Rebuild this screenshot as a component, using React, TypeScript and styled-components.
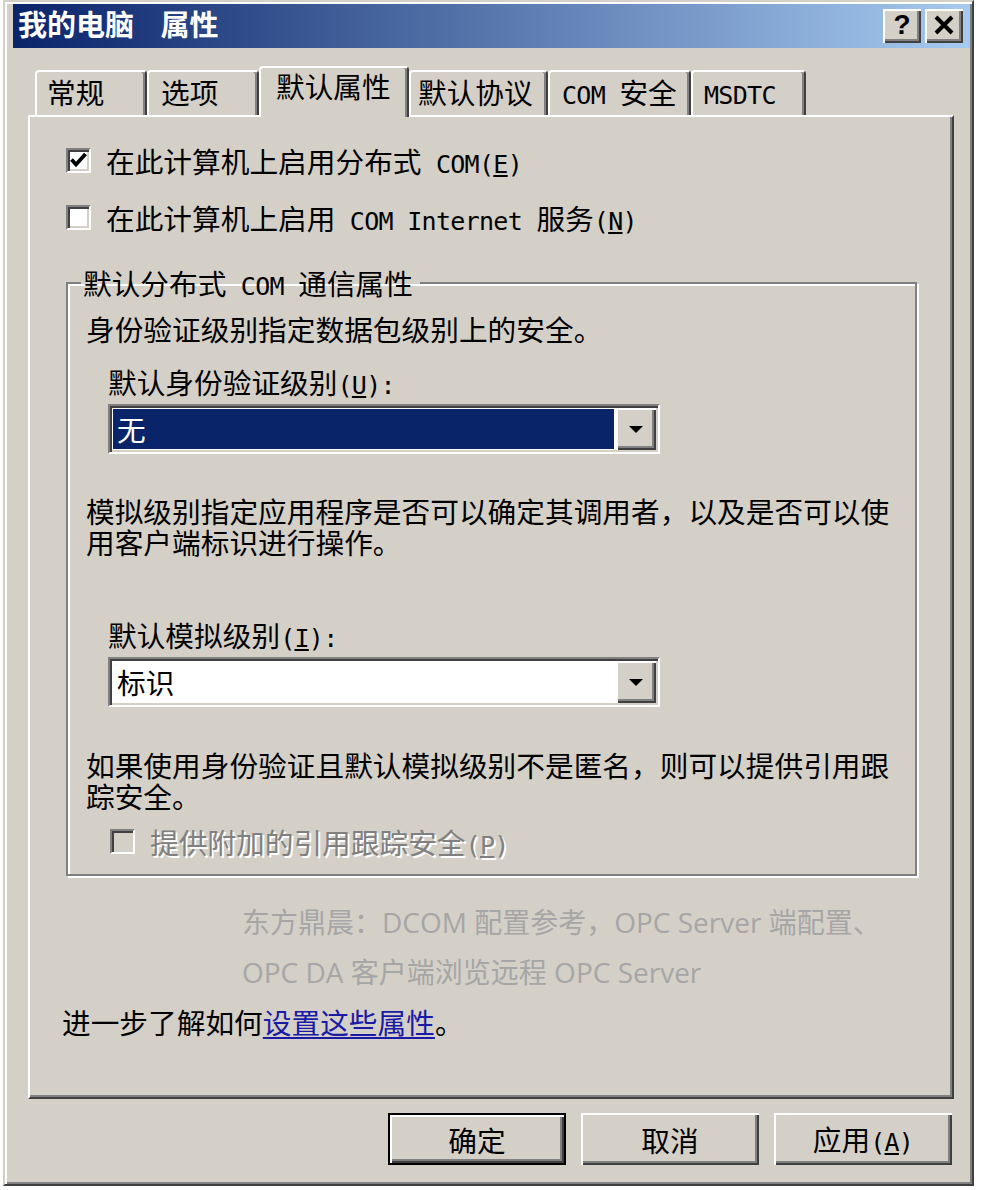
import React from "react";
import styled, { createGlobalStyle } from "styled-components";

const FACE = "#d4d0c8";
const CJK = `"Noto Sans CJK SC", "Noto Sans", sans-serif`;

const GlobalStyle = createGlobalStyle`
  html, body { margin: 0; padding: 0; background: #ffffff; }
  body { font-family: ${CJK}; }
  * { box-sizing: border-box; }
`;

const Window = styled.div`
  width: 971px;
  height: 1186px;
  margin-left: 3px;
  background: ${FACE};
  border: 2px solid;
  border-color: ${FACE} #404040 #404040 ${FACE};
  box-shadow: inset 2px 2px #fff, inset -2px -2px #808080;
  padding: 2px 2px 0 8px;
  display: flex;
  flex-direction: column;
  font-family: ${CJK};
  font-size: 28.7px;
  line-height: 31px;
  color: #000;
`;

const TitleBar = styled.div`
  height: 44px;
  flex: none;
  display: flex;
  align-items: center;
  justify-content: space-between;
  padding: 0 7px 0 5px;
  background: linear-gradient(90deg, #0a246a 0%, #a6caf0 100%);
`;

const TitleText = styled.div`
  color: #fff;
  font-weight: 700;
  font-size: 29px;
  line-height: 36px;
  padding-top: 6px;
  word-spacing: 9px;
  font-family: "Liberation Mono", ${CJK};
  white-space: nowrap;
`;

const TitleButtons = styled.div`
  display: flex;
  gap: 4px;
`;

const TitleButton = styled.div`
  width: 38px;
  height: 34px;
  background: ${FACE};
  box-shadow: inset 2px 2px #fff, inset -2px -2px #404040, inset -4px -4px #808080;
  display: flex;
  align-items: center;
  justify-content: center;
  font-family: "Liberation Sans", Arial, sans-serif;
  font-weight: 700;
  font-size: 28px;
  line-height: 1;
  color: #000;
  padding-bottom: 2px;
`;

const Body = styled.div`
  flex: 1;
  display: flex;
  flex-direction: column;
  padding: 18px 16px 0 15px;
`;

const TabStrip = styled.div`
  height: 49px;
  flex: none;
  display: flex;
  align-items: flex-end;
  padding-left: 7px;
  position: relative;
  z-index: 1;
`;

const Tab = styled.div<{ $active?: boolean; $w: number; $pad: number }>`
  width: ${(p) => p.$w}px;
  height: ${(p) => (p.$active ? 51 : 45)}px;
  margin-bottom: ${(p) => (p.$active ? -2 : 0)}px;
  padding: ${(p) => (p.$active ? 2 : 4)}px 0 0 ${(p) => p.$pad}px;
  background: ${FACE};
  border-top: 2px solid #fff;
  border-left: 2px solid #fff;
  border-right: 2px solid #404040;
  box-shadow: inset -2px 0 #808080;
  border-radius: 4px 4px 0 0;
  white-space: nowrap;
`;

const Panel = styled.div`
  height: 984px;
  flex: none;
  display: flex;
  flex-direction: column;
  align-items: flex-start;
  padding-left: 36px;
  border: 2px solid;
  border-color: #fff #404040 #404040 #fff;
  box-shadow: inset -2px -2px #808080;
`;

const Lat = styled.span`
  font-family: "DejaVu Sans Mono", "Liberation Mono", monospace;
  font-size: 25px;
  line-height: 1;
  letter-spacing: -0.7px;
`;

const CheckRow = styled.div<{ $mt: number; $ml?: number; $disabled?: boolean }>`
  display: flex;
  align-items: center;
  gap: 15px;
  height: 31px;
  margin-top: ${(p) => p.$mt}px;
  margin-left: ${(p) => p.$ml ?? 0}px;
  white-space: nowrap;
  color: ${(p) => (p.$disabled ? "#808080" : "#000")};
  text-shadow: ${(p) => (p.$disabled ? "2px 2px 0 #fff" : "none")};
`;

const CheckBox = styled.span<{ $disabled?: boolean }>`
  width: 25px;
  height: 25px;
  flex: none;
  display: flex;
  align-items: center;
  justify-content: center;
  border: 2px solid;
  border-color: #808080 #fff #fff #808080;
  box-shadow: inset 2px 2px #404040, inset -2px -2px ${FACE};
  background: ${(p) => (p.$disabled ? FACE : "#fff")};
`;

const GroupBox = styled.fieldset`
  width: 851px;
  margin: 34px 0 0 0;
  padding: 0 0 17px 0;
  border: 2px solid #808080;
  box-shadow: inset 2px 2px #fff, 2px 2px #fff;
  min-width: 0;
`;

const GroupLegend = styled.legend`
  margin-left: 13px;
  padding: 0 7px 0 2px;
  line-height: 31px;
  white-space: nowrap;
`;

const GroupContent = styled.div`
  display: flex;
  flex-direction: column;
  align-items: flex-start;
  padding-left: 18px;
`;

const Para = styled.div<{ $mt: number; $ml?: number }>`
  margin-top: ${(p) => p.$mt}px;
  margin-left: ${(p) => p.$ml ?? 0}px;
  white-space: nowrap;
`;

const Combo = styled.div`
  width: 552px;
  height: 50px;
  margin: 6px 0 0 22px;
  display: flex;
  padding: 2px;
  background: #fff;
  border: 2px solid;
  border-color: #808080 #fff #fff #808080;
  box-shadow: inset 2px 2px #404040, inset -2px -2px ${FACE};
`;

const ComboField = styled.div<{ $selected?: boolean }>`
  flex: 1;
  margin: 1px 2px 1px 1px;
  padding-left: 4px;
  line-height: 40px;
  background: ${(p) => (p.$selected ? "#0a246a" : "#fff")};
  color: ${(p) => (p.$selected ? "#fff" : "#000")};
`;

const DropButton = styled.div`
  width: 40px;
  flex: none;
  background: ${FACE};
  box-shadow: inset 2px 2px #fff, inset -2px -2px #404040, inset -4px -4px #808080;
  display: flex;
  align-items: center;
  justify-content: center;
`;

const Watermark = styled.div`
  margin: 21px 0 0 176px;
  font-family: "Open Sans", "Noto Sans CJK SC", sans-serif;
  font-size: 28px;
  line-height: 50px;
  color: #a6a6a6;
  white-space: nowrap;
`;

const HelpLine = styled.div`
  margin: 9px 0 0 -4px;
  white-space: nowrap;
`;

const Link = styled.a`
  color: #1a1aa6;
  text-decoration: underline;
  text-underline-offset: 3px;
  cursor: pointer;
`;

const ButtonRow = styled.div`
  margin-top: 14px;
  display: flex;
  justify-content: flex-end;
  gap: 15px;
  padding-right: 2px;
`;

const Button = styled.button<{ $default?: boolean }>`
  width: 178px;
  height: 52px;
  padding: 0;
  font-family: ${CJK};
  font-size: 28.7px;
  line-height: 31px;
  color: #000;
  background: ${FACE};
  border: ${(p) => (p.$default ? "2px solid #000" : "none")};
  box-shadow: inset 2px 2px #fff, inset -2px -2px #404040, inset -4px -4px #808080;
`;

const Arrow = () => (
  <svg width="16" height="9" viewBox="0 0 16 9">
    <path d="M1 1 H15 L8 8 Z" fill="#000" />
  </svg>
);

const CheckMark = () => (
  <svg width="19" height="19" viewBox="0 0 19 19">
    <path d="M2.5 8.5 L7 13.5 L16.5 3" fill="none" stroke="#000" strokeWidth="3.8" />
  </svg>
);

const CloseGlyph = () => (
  <svg width="22" height="20" viewBox="0 0 22 20">
    <path d="M3 2 L19 18 M19 2 L3 18" stroke="#000" strokeWidth="4" />
  </svg>
);

const tabs = [
  { label: "常规", w: 112, pad: 10 },
  { label: "选项", w: 112, pad: 12 },
  { label: "默认属性", w: 150, pad: 15, active: true },
  { label: "默认协议", w: 139, pad: 7 },
  { label: <><Lat>COM </Lat>安全</>, w: 143, pad: 12 },
  { label: <Lat>MSDTC</Lat>, w: 115, pad: 11 },
];

export default function App() {
  return (
    <>
      <GlobalStyle />
      <Window>
        <TitleBar>
          <TitleText>我的电脑 属性</TitleText>
          <TitleButtons>
            <TitleButton>?</TitleButton>
            <TitleButton>
              <CloseGlyph />
            </TitleButton>
          </TitleButtons>
        </TitleBar>
        <Body>
          <TabStrip>
            {tabs.map((t, i) => (
              <Tab key={i} $w={t.w} $pad={t.pad} $active={t.active}>
                {t.label}
              </Tab>
            ))}
          </TabStrip>
          <Panel>
            <CheckRow $mt={28}>
              <CheckBox>
                <CheckMark />
              </CheckBox>
              <span>
                在此计算机上启用分布式<Lat> COM(<u>E</u>)</Lat>
              </span>
            </CheckRow>
            <CheckRow $mt={26}>
              <CheckBox />
              <span>
                在此计算机上启用<Lat> COM Internet </Lat>服务<Lat>(<u>N</u>)</Lat>
              </span>
            </CheckRow>
            <GroupBox>
              <GroupLegend>
                默认分布式<Lat> COM </Lat>通信属性
              </GroupLegend>
              <GroupContent>
                <Para $mt={14}>身份验证级别指定数据包级别上的安全。</Para>
                <Para $mt={22} $ml={22}>
                  默认身份验证级别<Lat>(<u>U</u>):</Lat>
                </Para>
                <Combo>
                  <ComboField $selected>无</ComboField>
                  <DropButton>
                    <Arrow />
                  </DropButton>
                </Combo>
                <Para $mt={41}>
                  模拟级别指定应用程序是否可以确定其调用者，以及是否可以使
                  <br />
                  用客户端标识进行操作。
                </Para>
                <Para $mt={62} $ml={22}>
                  默认模拟级别<Lat>(<u>I</u>):</Lat>
                </Para>
                <Combo>
                  <ComboField>标识</ComboField>
                  <DropButton>
                    <Arrow />
                  </DropButton>
                </Combo>
                <Para $mt={42}>
                  如果使用身份验证且默认模拟级别不是匿名，则可以提供引用跟
                  <br />
                  踪安全。
                </Para>
                <CheckRow $mt={15} $ml={24} $disabled>
                  <CheckBox $disabled />
                  <span>
                    提供附加的引用跟踪安全<Lat>(<u>P</u>)</Lat>
                  </span>
                </CheckRow>
              </GroupContent>
            </GroupBox>
            <Watermark>
              东方鼎晨：DCOM 配置参考，OPC Server 端配置、
              <br />
              OPC DA 客户端浏览远程 OPC Server
            </Watermark>
            <HelpLine>
              进一步了解如何<Link>设置这些属性</Link>。
            </HelpLine>
          </Panel>
          <ButtonRow>
            <Button $default>确定</Button>
            <Button>取消</Button>
            <Button>
              应用<Lat>(<u>A</u>)</Lat>
            </Button>
          </ButtonRow>
        </Body>
      </Window>
    </>
  );
}
